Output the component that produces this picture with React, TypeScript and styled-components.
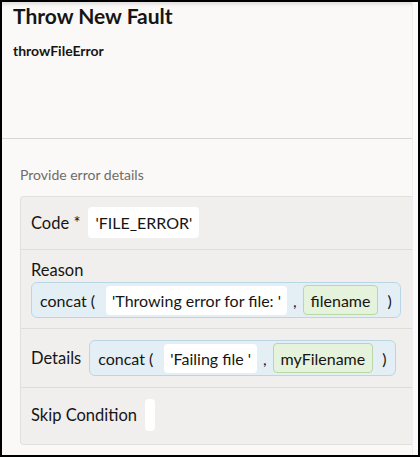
import { createGlobalStyle } from 'styled-components';
import styled from 'styled-components';

const GlobalStyle = createGlobalStyle`
  html, body {
    margin: 0;
    padding: 0;
    background: #ffffff;
  }
  body {
    font-family: Lato, 'Noto Sans', 'Liberation Sans', sans-serif;
    color: #161513;
  }
  * {
    box-sizing: border-box;
  }
`;

const Frame = styled.div`
  width: 420px;
  height: 457px;
  border: 2px solid #000;
  display: flex;
  overflow: hidden;
`;

const Content = styled.div`
  flex: 1;
  min-width: 0;
  display: flex;
  flex-direction: column;
  background: #faf9f8;
`;

const ScrollStrip = styled.div`
  width: 6px;
  background: #fbfbfb;
  border-left: 1px solid #efefef;
`;

const Header = styled.header`
  height: 137px;
  padding: 1px 0 0 11px;
  border-bottom: 1px solid #d8d5d2;
  box-shadow: inset 0 5px 4px -3px rgba(0, 0, 0, 0.12);
`;

const Title = styled.h1`
  margin: 0;
  font-size: 21px;
  font-weight: 700;
  line-height: 25px;
`;

const SubTitle = styled.div`
  margin-top: 14px;
  font-size: 14px;
  line-height: 17px;
  font-weight: 700;
`;

const Body = styled.section`
  flex: 1;
  padding: 27px 0 0 18px;
`;

const SectionLabel = styled.div`
  font-size: 14px;
  line-height: 17px;
  color: #6f6c69;
  margin-bottom: 13px;
`;

const Panel = styled.div`
  background: #f1efed;
  border: 1px solid #e3e0dc;
  border-right: none;
  border-radius: 4px 0 0 4px;
`;

const Row = styled.div<{ $stacked?: boolean; $top?: number; $bottom?: number }>`
  display: flex;
  flex-direction: ${(p) => (p.$stacked ? 'column' : 'row')};
  align-items: ${(p) => (p.$stacked ? 'flex-start' : 'center')};
  gap: ${(p) => (p.$stacked ? '2px' : '8px')};
  padding: ${(p) => p.$top ?? 10}px 10px ${(p) => p.$bottom ?? 10}px;
  & + & {
    border-top: 1px solid #e0dcd8;
  }
`;

const Label = styled.span`
  font-size: 16.5px;
  line-height: 20px;
  white-space: nowrap;
`;

const Chip = styled.span<{ $empty?: boolean }>`
  display: inline-flex;
  align-items: center;
  height: ${(p) => (p.$empty ? '32px' : '31px')};
  width: ${(p) => (p.$empty ? '10px' : 'auto')};
  padding: ${(p) => (p.$empty ? '0' : '0 7px')};
  background: #ffffff;
  border-radius: 4px;
  font-size: 16px;
  white-space: pre;
`;

const Expr = styled.div`
  display: inline-flex;
  align-items: center;
  height: 36px;
  padding: 0 8px;
  gap: 6px;
  background: #e3eff5;
  border: 1px solid #b9d6e5;
  border-radius: 6px;
  font-size: 16px;
  white-space: pre;
`;

const Fn = styled.span`
  margin-right: 5px;
`;

const Arg = styled.span`
  display: inline-flex;
  align-items: center;
  height: 29px;
  padding: 0 6px;
  background: #ffffff;
  border-radius: 4px;
  white-space: pre;
`;

const VarChip = styled.span`
  display: inline-flex;
  align-items: center;
  height: 30px;
  padding: 0 7px;
  background: #e5f2dc;
  border: 1px solid #b8d9a6;
  border-radius: 4px;
`;

const Paren = styled.span`
  margin-left: 3px;
`;

interface ConcatProps {
  text: string;
  variable: string;
}

const Concat = ({ text, variable }: ConcatProps) => (
  <Expr>
    <Fn>concat (</Fn>
    <Arg>{text}</Arg>
    <span>,</span>
    <VarChip>{variable}</VarChip>
    <Paren>)</Paren>
  </Expr>
);

const App = () => {
  return (
    <>
      <GlobalStyle />
      <Frame>
        <Content>
          <Header>
            <Title>Throw New Fault</Title>
            <SubTitle>throwFileError</SubTitle>
          </Header>
          <Body>
            <SectionLabel>Provide error details</SectionLabel>
            <Panel>
              <Row $top={10} $bottom={11}>
                <Label>Code *</Label>
                <Chip>'FILE_ERROR'</Chip>
              </Row>
              <Row $stacked>
                <Label>Reason</Label>
                <Concat text="'Throwing error for file: '" variable="filename" />
              </Row>
              <Row $top={11} $bottom={11}>
                <Label>Details</Label>
                <Concat text="'Failing file '" variable="myFilename" />
              </Row>
              <Row $top={11} $bottom={13}>
                <Label>Skip Condition</Label>
                <Chip $empty />
              </Row>
            </Panel>
          </Body>
        </Content>
        <ScrollStrip />
      </Frame>
    </>
  );
};

export default App;
